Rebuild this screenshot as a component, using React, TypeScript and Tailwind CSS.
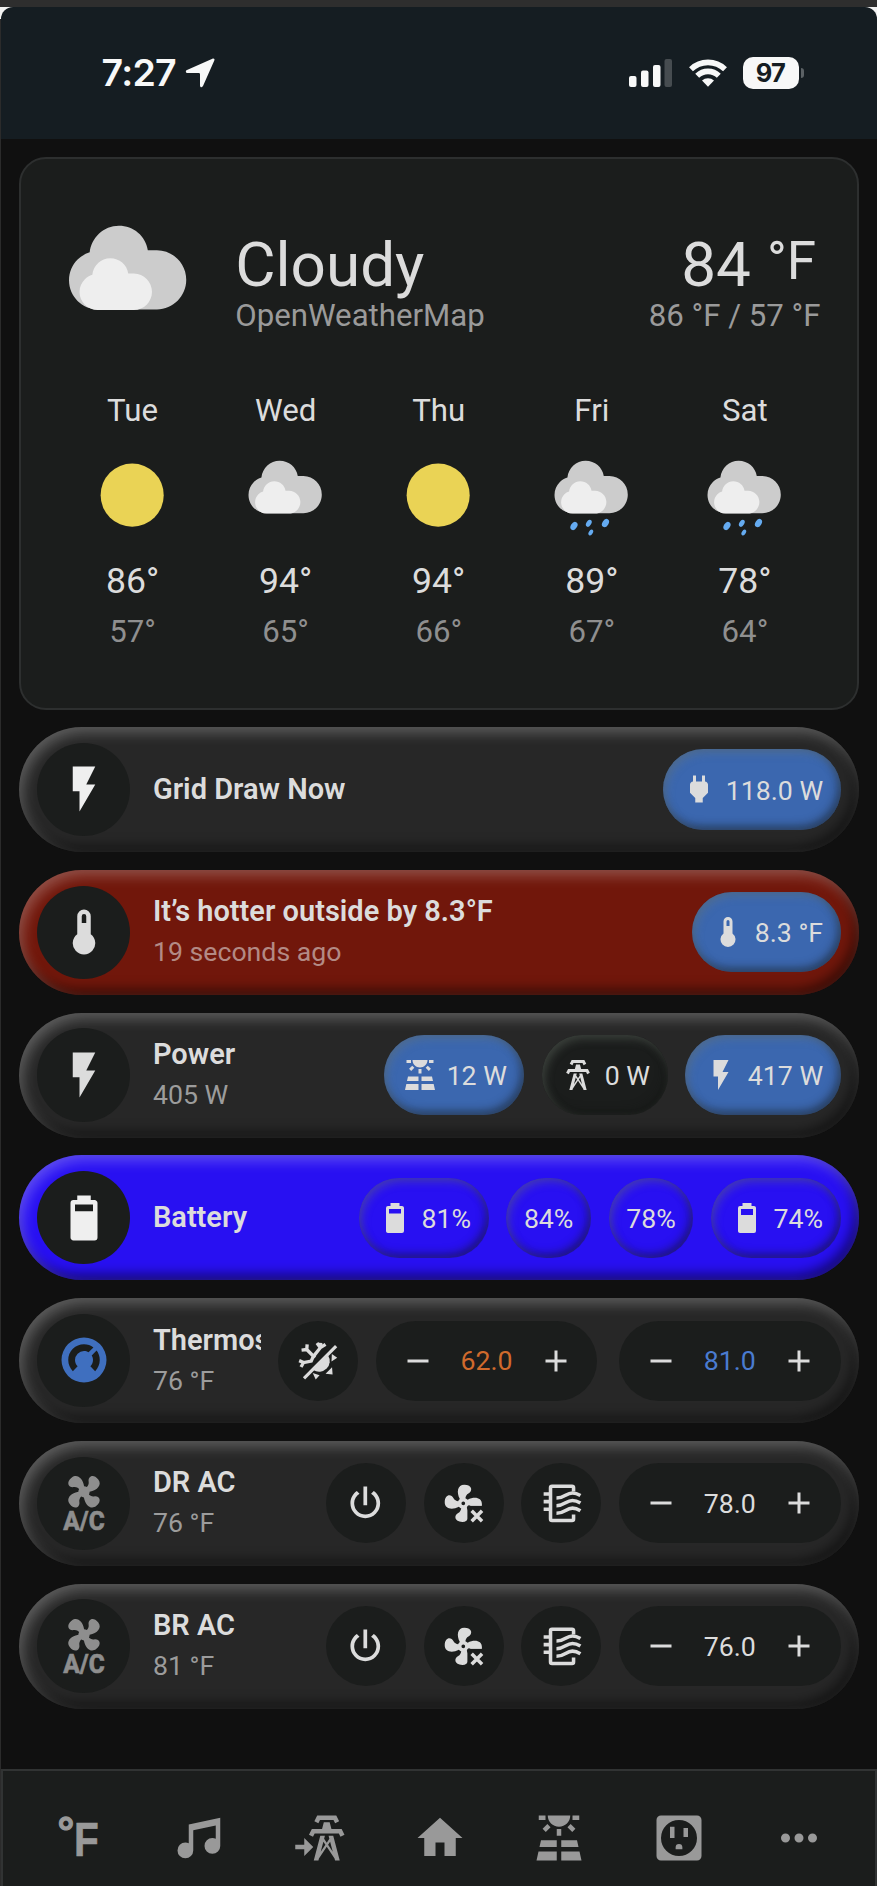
import type { ReactNode } from "react";

const PATHS = {
  flash: "M7,2V13H10V22L17,10H13L17,2H7Z",
  thermometer: "M15 13V5A3 3 0 0 0 9 5V13A5 5 0 1 0 15 13M12 4A1 1 0 0 1 13 5V8H11V5A1 1 0 0 1 12 4Z",
  plug: "M16,7V3H14V7H10V3H8V7H8C7,7 6,8 6,9V14.5L9.5,18V21H14.5V18L18,14.5V9C18,8 17,7 16,7Z",
  battery80:
    "M16,9H8V6H16M16.67,4H15V2H9V4H7.33A1.33,1.33 0 0,0 6,5.33V20.67C6,21.4 6.6,22 7.33,22H16.67A1.33,1.33 0 0,0 18,20.67V5.33C18,4.6 17.4,4 16.67,4Z",
  battery70:
    "M16,10H8V6H16M16.67,4H15V2H9V4H7.33A1.33,1.33 0 0,0 6,5.33V20.67C6,21.4 6.6,22 7.33,22H16.67A1.33,1.33 0 0,0 18,20.67V5.33C18,4.6 17.4,4 16.67,4Z",
  solar:
    "M3.33 16H11V13H4L3.33 16M13 16H20.67L20 13H13V16M21.11 18H13V22H22L21.11 18M2 22H11V18H2.89L2 22M11 8H13V11H11V8M15.76 7.21L17.18 5.79L19.3 7.91L17.89 9.33L15.76 7.21M4.71 7.91L6.83 5.79L8.24 7.21L6.12 9.33L4.71 7.91M3 2H6V4H3V2M18 2H21V4H18V2M12 7C14.76 7 17 4.76 17 2H7C7 4.76 9.24 7 12 7Z",
  tower:
    "M8.28,5.45L6.5,4.55L7.76,2H16.23L17.5,4.55L15.72,5.44L15,4H9L8.28,5.45M18.62,8H14.09L13.3,5H10.7L9.91,8H5.38L4.1,10.55L5.89,11.44L6.62,10H17.38L18.1,11.45L19.89,10.56L18.62,8M17.77,22H15.7L15.46,21.1L12,15.9L8.53,21.1L8.3,22H6.23L9.12,11H11.19L10.83,12.35L12,14.1L13.16,12.35L12.81,11H14.88L17.77,22M11.4,15L10.5,13.65L9.32,18.13L11.4,15M14.68,18.12L13.5,13.64L12.6,15L14.68,18.12Z",
  thermostat:
    "M16.95,16.95L14.83,14.83C15.55,14.1 16,13.1 16,12C16,11.26 15.79,10.57 15.43,10L17.6,7.81C18.5,9 19,10.43 19,12C19,13.93 18.22,15.68 16.95,16.95M12,5C13.57,5 15,5.5 16.19,6.4L14,8.56C13.43,8.21 12.74,8 12,8A4,4 0 0,0 8,12C8,13.1 8.45,14.1 9.17,14.83L7.05,16.95C5.78,15.68 5,13.93 5,12A7,7 0 0,1 12,5M12,2A10,10 0 0,0 2,12A10,10 0 0,0 12,22A10,10 0 0,0 22,12A10,10 0 0,0 12,2Z",
  power:
    "M16.56,5.44L15.11,6.89C16.84,7.94 18,9.83 18,12A6,6 0 0,1 12,18A6,6 0 0,1 6,12C6,9.83 7.16,7.94 8.88,6.88L7.44,5.44C5.36,6.88 4,9.28 4,12A8,8 0 0,0 12,20A8,8 0 0,0 20,12C20,9.28 18.64,6.88 16.56,5.44M13,3H11V13H13",
  fan: "M12,11A1,1 0 0,0 11,12A1,1 0 0,0 12,13A1,1 0 0,0 13,12A1,1 0 0,0 12,11M12.5,2C17,2 17.11,5.57 14.75,6.75C13.76,7.24 13.32,8.29 13.13,9.22C13.61,9.42 14.03,9.73 14.35,10.13C18.05,8.13 22.03,8.92 22.03,12.5C22.03,17 18.46,17.1 17.28,14.73C16.78,13.74 15.72,13.3 14.79,13.11C14.59,13.59 14.28,14 13.88,14.34C15.87,18.03 15.08,22 11.5,22C7,22 6.91,18.42 9.27,17.24C10.25,16.75 10.69,15.71 10.89,14.79C10.4,14.59 9.97,14.27 9.65,13.87C5.96,15.85 2,15.07 2,11.5C2,7 5.56,6.89 6.74,9.26C7.24,10.25 8.29,10.68 9.22,10.87C9.41,10.39 9.73,9.97 10.14,9.65C8.15,5.96 8.94,2 12.5,2Z",
  acBlades:
    "M6.59,0.66C8.93,-1.15 11.47,1.06 12.04,4.5C12.47,4.5 12.89,4.62 13.27,4.84C13.79,4.24 14.25,3.42 14.07,2.5C13.65,0.35 16.06,-1.39 18.35,1.58C20.16,3.92 17.95,6.46 14.5,7.03C14.5,7.46 14.39,7.89 14.16,8.27C14.76,8.78 15.58,9.24 16.5,9.06C18.63,8.64 20.38,11.04 17.41,13.34C15.07,15.15 12.53,12.94 11.96,9.5C11.53,9.5 11.11,9.37 10.74,9.15C10.22,9.75 9.75,10.58 9.93,11.5C10.35,13.64 7.94,15.39 5.65,12.42C3.83,10.07 6.05,7.53 9.5,6.97C9.5,6.54 9.63,6.12 9.85,5.74C9.25,5.23 8.43,4.76 7.5,4.94C5.37,5.36 3.62,2.96 6.59,0.66",
  minus: "M19,13H5V11H19V13Z",
  plus: "M19,13H13V19H11V13H5V11H11V5H13V11H19V13Z",
  home: "M10,20V14H14V20H19V12H22L12,3L2,12H5V20H10Z",
  music:
    "M21,3V15.5A3.5,3.5 0 0,1 17.5,19A3.5,3.5 0 0,1 14,15.5A3.5,3.5 0 0,1 17.5,12C18.04,12 18.55,12.12 19,12.34V6.47L9,8.6V17.5A3.5,3.5 0 0,1 5.5,21A3.5,3.5 0 0,1 2,17.5A3.5,3.5 0 0,1 5.5,14C6.04,14 6.55,14.12 7,14.34V6L21,3Z",
};

function Icon({ d, className }: { d: string; className: string }) {
  return (
    <svg viewBox="0 0 24 24" fill="currentColor" fillRule="evenodd" className={`shrink-0 ${className}`}>
      <path d={d} />
    </svg>
  );
}

/* ---------- weather ---------- */

function WeatherIcon({ kind, className }: { kind: "sunny" | "cloudy" | "rainy"; className: string }) {
  return (
    <svg viewBox="0 0 17 17" className={className}>
      {kind === "sunny" ? (
        <circle cx="8.4" cy="8.4" r="6" fill="#ead355" />
      ) : (
        <>
          <path
            fill="#cccccc"
            d="m3.8863 5.035c-0.54892 0.16898-1.04 0.46637-1.4372 0.8636-0.63077 0.63041-1.0206 1.4933-1.0206 2.455 0 1.9251 1.5589 3.4682 3.4837 3.4682h6.9688c1.9251 0 3.484-1.5981 3.484-3.5232 0-1.9251-1.5589-3.5232-3.484-3.5232h-1.0834c-0.25294-1.6916-1.6986-2.9083-3.4463-2.9083-1.7995 0-3.2805 1.4153-3.465 3.1679"
          />
          <path
            fill="#eeeeee"
            d="m4.1996 7.6995c-0.33902 0.10407-0.64276 0.28787-0.88794 0.5334-0.39017 0.38982-0.63147 0.92322-0.63147 1.5176 0 1.1896 0.96414 2.1431 2.1537 2.1431h4.3071c1.1896 0 2.153-0.98742 2.153-2.1777 0-1.1896-0.96344-2.1777-2.153-2.1777h-0.66992c-0.15593-1.0449-1.0499-1.7974-2.1297-1.7974-1.112 0-2.0274 0.87524-2.1417 1.9586"
          />
          {kind === "rainy" && (
            <g fill="#65abf0">
              <ellipse cx="5.13" cy="14.25" rx="0.58" ry="0.85" transform="rotate(32 5.13 14.25)" />
              <ellipse cx="7.95" cy="13.75" rx="0.46" ry="0.72" transform="rotate(32 7.95 13.75)" />
              <ellipse cx="11.12" cy="13.7" rx="0.58" ry="0.85" transform="rotate(32 11.12 13.7)" />
              <ellipse cx="8.33" cy="15.5" rx="0.38" ry="0.6" transform="rotate(32 8.33 15.5)" />
            </g>
          )}
        </>
      )}
    </svg>
  );
}

const FORECAST = [
  { day: "Tue", kind: "sunny", high: "86°", low: "57°" },
  { day: "Wed", kind: "cloudy", high: "94°", low: "65°" },
  { day: "Thu", kind: "sunny", high: "94°", low: "66°" },
  { day: "Fri", kind: "rainy", high: "89°", low: "67°" },
  { day: "Sat", kind: "rainy", high: "78°", low: "64°" },
] as const;

function WeatherCard() {
  return (
    <section className="ml-[19px] mr-[18.5px] mt-[17.5px] h-[553px] rounded-[27px] border-2 border-[#2d2f2f] bg-[#1b1d1c] px-[35px] pt-[51px]">
      <div className="flex h-[143px] items-start">
        <WeatherIcon kind="cloudy" className="ml-[0.7px] size-[143px] shrink-0" />
        <div className="ml-[35.5px] pt-[24px]">
          <div className="text-[62px] leading-[62px]">Cloudy</div>
          <div className="text-[31.2px] leading-[40px] text-[#9a9a9a]">OpenWeatherMap</div>
        </div>
        <div className="ml-auto pt-[24px] text-right">
          <div className="flex h-[62px] items-start justify-end pr-[5.5px]">
            <span className="text-[62px] leading-[62px]">84</span>
            <span className="ml-[16px] text-[53px] leading-[55px]">°F</span>
          </div>
          <div className="pr-[1px] text-[31.2px] leading-[40px] text-[#9a9a9a]">86 °F / 57 °F</div>
        </div>
      </div>
      <div className="grid grid-cols-5 pt-[38px] text-center">
        {FORECAST.map((f) => (
          <div key={f.day} className="flex flex-col items-center">
            <div className="text-[31.2px] leading-[40px]">{f.day}</div>
            <WeatherIcon kind={f.kind} className="mt-[20px] size-[89.4px]" />
            <div className="mt-[16px] text-[35.6px] leading-[50px]">{f.high}</div>
            <div className="text-[31.2px] leading-[51px] text-[#8f8f8f]">{f.low}</div>
          </div>
        ))}
      </div>
    </section>
  );
}

/* ---------- pill rows ---------- */

function Row({
  icon,
  name,
  sub,
  bg = "bg-[#272727]",
  subColor = "text-[#9c9c9c]",
  children,
}: {
  icon: ReactNode;
  name: string;
  sub?: string;
  bg?: string;
  subColor?: string;
  children: ReactNode;
}) {
  return (
    <div
      className={`flex h-[125px] items-center rounded-full pl-[18px] pr-[18.4px] shadow-[inset_4px_6px_13px_rgba(255,255,255,0.25),inset_-5px_-6px_12px_rgba(0,0,0,0.5)] ${bg}`}
    >
      <div className="flex size-[93.4px] shrink-0 items-center justify-center rounded-full bg-[#1b1d1c]">{icon}</div>
      <div className="ml-[22.5px] mr-[17.5px] min-w-0 flex-1 overflow-hidden whitespace-nowrap">
        <div className="text-[29px] font-semibold leading-[41px]">{name}</div>
        {sub && <div className={`text-[26.7px] leading-[41px] ${subColor}`}>{sub}</div>}
      </div>
      <div className="flex shrink-0 items-center gap-[17.8px]">{children}</div>
    </div>
  );
}

function Chip({ tone, icon, children }: { tone: "blue" | "dark" | "clear"; icon?: string; children: string }) {
  const bg = { blue: "bg-[#3b67af]", dark: "bg-[#1b1d1c]", clear: "bg-transparent" }[tone];
  return (
    <div
      className={`flex h-[80.4px] items-center gap-[9px] rounded-full px-[17.5px] text-[26.7px] shadow-[inset_3px_4px_9px_rgba(110,120,110,0.38),inset_-3px_-4px_9px_rgba(20,22,20,0.5)] ${bg}`}
    >
      {icon && <Icon d={icon} className="size-[36px]" />}
      <span className="pt-[2.5px]">{children}</span>
    </div>
  );
}

function Round({ children }: { children: ReactNode }) {
  return <div className="flex size-[80px] items-center justify-center rounded-full bg-[#1b1d1c]">{children}</div>;
}

function Stepper({ value, color = "" }: { value: string; color?: string }) {
  return (
    <div className="flex h-[80px] w-[221.5px] items-center justify-between rounded-full bg-[#1b1d1c] px-[23.7px] text-[26.7px]">
      <Icon d={PATHS.minus} className="size-[36px]" />
      <span className={`pt-[2px] ${color}`}>{value}</span>
      <Icon d={PATHS.plus} className="size-[36px]" />
    </div>
  );
}

function AcIcon() {
  return (
    <svg viewBox="0 0 24 24" fill="currentColor" className="size-[54px] overflow-visible text-[#8e8e8e]">
      <path d={PATHS.acBlades} />
      <text
        x="2.8"
        y="23.9"
        fontFamily="Roboto, 'Liberation Sans', sans-serif"
        fontWeight="800"
        fontSize="11.2"
        textLength="18.4"
        lengthAdjust="spacingAndGlyphs"
        stroke="currentColor"
        strokeWidth="0.25"
      >
        A/C
      </text>
    </svg>
  );
}

function HeatCoolIcon() {
  return (
    <svg viewBox="0 0 24 24" className="size-[44.6px]" fill="none" stroke="currentColor" strokeWidth="1.7">
      <path d="M21.6 4.4L4.3 21.7" />
      <path
        d="M9.4 9.9L13.1 5.2L13.3 2.6M13.1 5.2L11.3 2.7M13.1 5.2L15.9 3.4M10.2 10.6L5.8 6.2L6 3.4M5.8 6.2L3 6.5M9.4 9.6L8.2 12.4L4.1 13.2L1.7 12.2M4.1 13.2L2.7 15.6"
        strokeWidth="1.8"
      />
      <path d="M17.2 9.3A5.7 5.7 0 0 1 9.3 17.2Z" fill="currentColor" stroke="none" />
      <path
        d="M19.3 8.6L22.2 10.6L19.1 12.6ZM19.4 15.8L19.7 19.7L15.9 19.3ZM9 18.9L12.7 20L10.6 22.4Z"
        fill="currentColor"
        stroke="none"
      />
    </svg>
  );
}

function FanRemoveIcon() {
  return (
    <svg viewBox="0 0 24 24" className="size-[44.6px]" fill="currentColor">
      <mask id="fan-cut">
        <rect width="24" height="24" fill="white" />
        <path d="M14.2 13.4H24V24H14.2Z" fill="black" />
      </mask>
      <path d={PATHS.fan} mask="url(#fan-cut)" />
      <path d="M16.5 16L22.1 21.6M22.1 16L16.5 21.6" stroke="currentColor" strokeWidth="1.9" />
    </svg>
  );
}

function ExchangerIcon() {
  return (
    <svg
      viewBox="0 0 24 24"
      className="size-[44.6px]"
      fill="none"
      stroke="currentColor"
      strokeWidth="1.9"
      strokeLinejoin="round"
    >
      <path d="M18.6 5.6V3.6Q18.6 2.8 17.8 2.8H7Q6.2 2.8 6.2 3.6V20.4Q6.2 21.2 7 21.2H17.8Q18.6 21.2 18.6 20.4V18" />
      <path d="M2.5 7H6M2.5 11.1H6M2.5 15.2H6" />
      <path d="M9.4 9.2C13.8 9.2 14.6 6.4 18 6.4C19.8 6.4 21 7 22.3 7.8M9.4 13.3C13.8 13.3 14.6 10.5 18 10.5C19.8 10.5 21 11.1 22.3 11.9M9.4 17.4C13.8 17.4 14.6 14.6 18 14.6C19.8 14.6 21 15.2 22.3 16" />
    </svg>
  );
}

function AcRow({ name, sub, target }: { name: string; sub: string; target: string }) {
  return (
    <Row icon={<AcIcon />} name={name} sub={sub}>
      <Round>
        <Icon d={PATHS.power} className="size-[44.6px]" />
      </Round>
      <Round>
        <FanRemoveIcon />
      </Round>
      <Round>
        <ExchangerIcon />
      </Round>
      <Stepper value={target} />
    </Row>
  );
}

/* ---------- chrome ---------- */

function StatusBar() {
  return (
    <header className="ml-px flex h-[132px] items-start justify-between rounded-t-[12px] bg-[#151d22] pl-[100.5px] pr-[73.5px] text-[#f7f8f8]">
      <div className="flex items-center pt-[42px]">
        <span className="font-[Inter] text-[37.5px] font-semibold leading-[48px] tracking-[-0.7px]">7:27</span>
        <svg viewBox="0 0 30 30" className="ml-[9px] size-[30px]" fill="currentColor">
          <path d="M27.4 0.7C28.9 0 30 1.1 29.3 2.6L18 28C17.2 29.8 15 29.4 15 27.4V16.2Q15 15 13.8 15H2.6C0.6 15 0.2 12.8 2 12Z" />
        </svg>
      </div>
      <div className="mt-[50px] flex h-[32px] items-center">
        <svg viewBox="0 0 43 28" className="h-[28px] w-[43px]" fill="currentColor">
          <rect x="0" y="17" width="7.5" height="11" rx="2" />
          <rect x="12" y="11.5" width="7.5" height="16.5" rx="2" />
          <rect x="24" y="6" width="7.5" height="22" rx="2" />
          <rect x="35.5" y="0" width="7.5" height="28" rx="2" opacity="0.22" />
        </svg>
        <svg
          viewBox="0 0 38 28"
          className="ml-[17px] h-[28px] w-[38px]"
          fill="none"
          stroke="currentColor"
          strokeWidth="5.6"
        >
          <path d="M2 10.2A24.5 24.5 0 0 1 36 10.2" />
          <path d="M8.2 16.8A15.5 15.5 0 0 1 29.8 16.8" />
          <path d="M13 21.6A8.6 8.6 0 0 1 25 21.6L19 27.8Z" fill="currentColor" stroke="none" />
        </svg>
        <div className="ml-[15.5px] flex h-[31.5px] w-[56px] items-center justify-center rounded-[10px] bg-[#f7f8f8] font-[Inter] text-[25.5px] font-bold tracking-[-0.8px] text-[#151d22]">
          97
        </div>
        <div className="ml-[2px] h-[10px] w-[3px] rounded-r-full bg-[#5b6165]" />
      </div>
    </header>
  );
}

function NavBar() {
  return (
    <nav className="ml-px mt-auto grid h-[117px] grid-cols-7 justify-items-center border-x-2 border-t-2 border-[#313333] bg-[#1b1d1c] pl-[17.6px] pr-[16.4px] pt-[39.5px] text-[#999999]">
      <svg viewBox="0 0 24 24" fill="currentColor" className="size-[54px] overflow-visible">
        <text
          x="2"
          y="16.2"
          fontFamily="'Liberation Sans', sans-serif"
          fontWeight="700"
          fontSize="18.6"
          stroke="currentColor"
          strokeWidth="0.5"
        >
          °
        </text>
        <text
          x="9.3"
          y="20"
          fontFamily="'Liberation Sans', sans-serif"
          fontWeight="700"
          fontSize="21.6"
          textLength="11"
          lengthAdjust="spacingAndGlyphs"
          stroke="currentColor"
          strokeWidth="0.3"
        >
          F
        </text>
      </svg>
      <Icon d={PATHS.music} className="size-[54px]" />
      <svg viewBox="0 0 24 24" fill="currentColor" fillRule="evenodd" className="size-[54px]">
        <path d={PATHS.tower} transform="translate(3 0)" />
        <path d="M1 15H5V12L9 16L5 20V17H1Z" />
      </svg>
      <Icon d={PATHS.home} className="size-[54px]" />
      <Icon d={PATHS.solar} className="size-[54px]" />
      <Icon
        className="size-[54px]"
        d="M4 2H20A2 2 0 0 1 22 4V20A2 2 0 0 1 20 22H4A2 2 0 0 1 2 20V4A2 2 0 0 1 4 2ZM12 4A8 8 0 1 0 12 20A8 8 0 1 0 12 4ZM8 7H10V12H8ZM14 7.5H16V11.5H14ZM10.5 17V16.2A1.5 1.5 0 0 1 13.5 16.2V17Z"
      />
      <Icon
        className="size-[54px]"
        d="M6 10A2 2 0 1 1 6 14A2 2 0 1 1 6 10ZM12 10A2 2 0 1 1 12 14A2 2 0 1 1 12 10ZM18 10A2 2 0 1 1 18 14A2 2 0 1 1 18 10Z"
      />
    </nav>
  );
}

export default function App() {
  return (
    <div className="flex h-[1886px] w-[877px] flex-col overflow-hidden bg-[linear-gradient(to_right,#2b2b2b_1px,#101010_1px)] font-[Roboto,'Noto_Sans',sans-serif] text-[#dcdcdc]">
      <div className="h-[7px] shrink-0 bg-[#2e2e2e]" />
      <div className="shrink-0 bg-[linear-gradient(#f2f2f2_12px,#2b2b2b_12px)]">
        <StatusBar />
      </div>
      <WeatherCard />
      <main className="ml-[19px] mr-[18px] mt-[17.5px] flex flex-col gap-[17.75px]">
        <Row icon={<Icon d={PATHS.flash} className="size-[54px] text-[#efefef]" />} name="Grid Draw Now">
          <Chip tone="blue" icon={PATHS.plug}>
            118.0 W
          </Chip>
        </Row>
        <Row
          bg="bg-[#71170b]"
          subColor="text-[#b38a85]"
          icon={<Icon d={PATHS.thermometer} className="size-[54px]" />}
          name="It’s hotter outside by 8.3°F"
          sub="19 seconds ago"
        >
          <Chip tone="blue" icon={PATHS.thermometer}>
            8.3 °F
          </Chip>
        </Row>
        <Row icon={<Icon d={PATHS.flash} className="size-[54px]" />} name="Power" sub="405 W">
          <Chip tone="blue" icon={PATHS.solar}>
            12 W
          </Chip>
          <Chip tone="dark" icon={PATHS.tower}>
            0 W
          </Chip>
          <Chip tone="blue" icon={PATHS.flash}>
            417 W
          </Chip>
        </Row>
        <Row
          bg="bg-[#2810f2]"
          icon={<Icon d={PATHS.battery80} className="size-[54px] text-[#efefef]" />}
          name="Battery"
        >
          <Chip tone="clear" icon={PATHS.battery80}>
            81%
          </Chip>
          <Chip tone="clear">84%</Chip>
          <Chip tone="clear">78%</Chip>
          <Chip tone="clear" icon={PATHS.battery70}>
            74%
          </Chip>
        </Row>
        <Row icon={<Icon d={PATHS.thermostat} className="size-[54px] text-[#3f6fbf]" />} name="Thermostat" sub="76 °F">
          <Round>
            <HeatCoolIcon />
          </Round>
          <Stepper value="62.0" color="text-[#d06a2c]" />
          <div className="ml-[4px]">
            <Stepper value="81.0" color="text-[#4a7bd0]" />
          </div>
        </Row>
        <AcRow name="DR AC" sub="76 °F" target="78.0" />
        <AcRow name="BR AC" sub="81 °F" target="76.0" />
      </main>
      <NavBar />
    </div>
  );
}
